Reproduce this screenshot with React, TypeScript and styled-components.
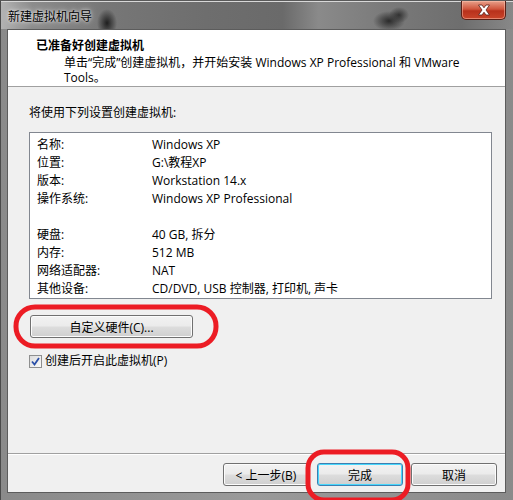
import styled, { createGlobalStyle } from "styled-components";

const GlobalStyle = createGlobalStyle`
  html, body {
    margin: 0;
    padding: 0;
    background: #8c8c8c;
  }
  body {
    font-family: "Open Sans", "Noto Sans CJK SC", sans-serif;
    font-size: 12px;
    color: #000;
  }
`;

const settings: [string, string][] = [
  ["名称:", "Windows XP"],
  ["位置:", "G:\\教程XP"],
  ["版本:", "Workstation 14.x"],
  ["操作系统:", "Windows XP Professional"],
  ["", ""],
  ["硬盘:", "40 GB, 拆分"],
  ["内存:", "512 MB"],
  ["网络适配器:", "NAT"],
  ["其他设备:", "CD/DVD, USB 控制器, 打印机, 声卡"],
];

const App = () => {
  return (
    <>
      <GlobalStyle />
      <Window>
        <TitleBar>
          <TitleText>新建虚拟机向导</TitleText>
          <CloseButton>
            <svg width="16" height="12" viewBox="0 0 16 12">
              <path
                d="M2.5 1 L6 1 L8 3.8 L10 1 L13.5 1 L10 6 L13.5 11 L10 11 L8 8.2 L6 11 L2.5 11 L6 6 Z"
                fill="#fff"
                stroke="#5a2018"
                strokeWidth="0.8"
              />
            </svg>
          </CloseButton>
        </TitleBar>
        <Client>
          <Header>
            <HeaderTitle>已准备好创建虚拟机</HeaderTitle>
            <HeaderText>
              单击“完成”创建虚拟机，并开始安装 Windows XP Professional 和 VMware
              Tools。
            </HeaderText>
          </Header>
          <Body>
            <Intro>将使用下列设置创建虚拟机:</Intro>
            <SettingsBox>
              {settings.map(([label, value], i) => (
                <SettingRow key={i}>
                  <SettingLabel>{label}</SettingLabel>
                  <span>{value}</span>
                </SettingRow>
              ))}
            </SettingsBox>
            <CustomizeButton>自定义硬件(C)...</CustomizeButton>
            <CheckRow>
              <CheckBox>
                <svg width="9" height="9" viewBox="0 0 9 9">
                  <path
                    d="M1 4.5 L3.5 7.5 L8 1"
                    fill="none"
                    stroke="#2a4fa8"
                    strokeWidth="1.8"
                  />
                </svg>
              </CheckBox>
              创建后开启此虚拟机(P)
            </CheckRow>
          </Body>
          <Footer>
            <DialogButton>&lt; 上一步(B)</DialogButton>
            <DialogButton $primary>完成</DialogButton>
            <DialogButton>取消</DialogButton>
          </Footer>
        </Client>
        {/* red pen marks around the two buttons */}
        <Marker width="206" height="45" style={{ left: 12, top: 303 }}>
          <rect x="3" y="3" width="200" height="39" rx="19" />
        </Marker>
        <Marker width="106" height="54" style={{ left: 304, top: 448 }}>
          <rect x="3" y="3" width="100" height="48" rx="16" />
        </Marker>
      </Window>
    </>
  );
};

export default App;

const Window = styled.div`
  position: relative;
  width: 513px;
  height: 500px;
  box-sizing: border-box;
  border-left: 1px solid #4a4a4a;
  border-top: 1px solid #5a5a5a;
  background: linear-gradient(90deg, #8a8a8a 0%, #9a9a9a 50%, #8a8a8a 100%);
  display: flex;
  flex-direction: column;
  overflow: hidden;
`;

const TitleBar = styled.div`
  height: 28px;
  flex-shrink: 0;
  display: flex;
  align-items: flex-start;
  justify-content: space-between;
  padding-left: 7px;
  background:
    radial-gradient(ellipse 10px 14px at 106px 22px, #1e1e1e, transparent),
    radial-gradient(ellipse 16px 10px at 388px 20px, #2a2a2a, transparent),
    radial-gradient(ellipse 10px 8px at 398px 14px, #333, transparent),
    linear-gradient(
      90deg,
      #b3b3b3 0%,
      #8c8c8c 6%,
      #777 20%,
      #6e6e6e 40%,
      #6a6a6a 55%,
      #8a8a8a 62%,
      #7a7a7a 75%,
      #6e6e6e 90%,
      #888 100%
    );
  box-shadow: inset 0 1px 0 #d8d8d8;
`;

const TitleText = styled.div`
  margin-top: 6px;
  font-size: 12px;
  color: #000;
  text-shadow: 0 0 6px rgba(255, 255, 255, 0.8), 0 0 3px rgba(255, 255, 255, 0.8);
`;

const CloseButton = styled.div`
  width: 45px;
  height: 19px;
  margin-right: 7px;
  box-sizing: border-box;
  border: 1px solid #5a1f16;
  border-top: none;
  border-radius: 0 0 5px 5px;
  background: linear-gradient(180deg, #e8a08a 0%, #d0553c 45%, #b8311c 55%, #c9442a 100%);
  box-shadow: inset 0 0 0 1px rgba(255, 200, 180, 0.5);
  display: flex;
  align-items: center;
  justify-content: center;
`;

const Client = styled.div`
  flex: 1;
  margin: 0 7px 7px 6px;
  border: 1px solid #5c5c5c;
  background: #f0f0f0;
  display: flex;
  flex-direction: column;
  min-height: 0;
`;

const Header = styled.div`
  height: 57px;
  box-sizing: border-box;
  background: #fff;
  border-bottom: 1px solid #a0a0a0;
  padding: 9px 20px 0 28px;
`;

const HeaderTitle = styled.div`
  font-weight: bold;
  line-height: 14px;
`;

const HeaderText = styled.div`
  margin-top: 2px;
  padding-left: 28px;
  line-height: 15px;
  width: 400px;
`;

const Body = styled.div`
  flex: 1;
  padding: 18px 12px 0 21px;
  display: flex;
  flex-direction: column;
  align-items: flex-start;
`;

const Intro = styled.div`
  line-height: 16px;
`;

const SettingsBox = styled.div`
  margin-top: 11px;
  width: 463px;
  height: 167px;
  box-sizing: border-box;
  border: 1px solid #828790;
  background: #fff;
  padding: 3px 0 0 7px;
`;

const SettingRow = styled.div`
  display: flex;
  height: 18px;
  line-height: 18px;
`;

const SettingLabel = styled.span`
  width: 115px;
  flex-shrink: 0;
`;

const ButtonBase = styled.div`
  height: 23px;
  box-sizing: border-box;
  border: 1px solid #707070;
  border-radius: 3px;
  background: linear-gradient(180deg, #f2f2f2 0%, #ebebeb 48%, #dddddd 52%, #cfcfcf 100%);
  box-shadow: inset 0 0 0 1px #fcfcfc;
  display: flex;
  align-items: center;
  justify-content: center;
`;

const CustomizeButton = styled(ButtonBase)`
  margin-top: 16px;
  margin-left: 1px;
  width: 163px;
`;

const CheckRow = styled.div`
  margin-top: 16px;
  display: flex;
  align-items: center;
  gap: 3px;
  line-height: 14px;
`;

const CheckBox = styled.div`
  width: 13px;
  height: 13px;
  box-sizing: border-box;
  border: 1px solid #8e8f8f;
  background: linear-gradient(135deg, #dcdcdc, #fafafa);
  display: flex;
  align-items: center;
  justify-content: center;
`;

const Footer = styled.div`
  height: 39px;
  flex-shrink: 0;
  box-sizing: border-box;
  border-top: 1px solid #a0a0a0;
  box-shadow: inset 0 1px 0 #fff;
  display: flex;
  align-items: flex-start;
  justify-content: flex-end;
  gap: 8px;
  padding: 9px 8px 0 0;
`;

const DialogButton = styled(ButtonBase)<{ $primary?: boolean }>`
  width: 86px;
  border-color: ${(p) => (p.$primary ? "#3c7fb1" : "#707070")};
  box-shadow: ${(p) =>
    p.$primary ? "inset 0 0 0 1px #48d7fc" : "inset 0 0 0 1px #fcfcfc"};
`;

const Marker = styled.svg`
  position: absolute;
  fill: none;
  stroke: #ec1c24;
  stroke-width: 5px;
  pointer-events: none;
`;
